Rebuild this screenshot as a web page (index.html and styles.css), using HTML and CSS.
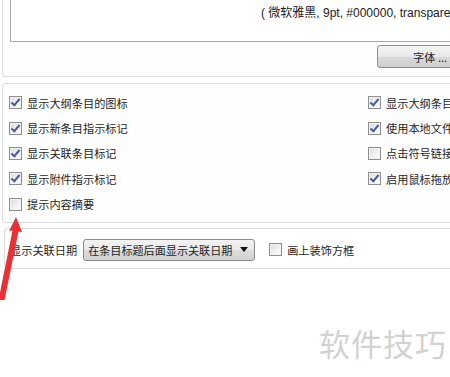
FILE: index.html
```html
<!DOCTYPE html>
<html lang="zh-CN">
<head>
<meta charset="utf-8">
<link rel="stylesheet" href="styles.css">
</head>
<body>
<div class="page">
  <section class="panel panel-font">
    <div class="preview">
      <div class="preview-text">
        <div class="cut-line">字体：微软雅黑</div>
        <div class="font-desc">( 微软雅黑, 9pt, #000000, transparent )</div>
      </div>
    </div>
    <div class="btn-row"><button class="btn">字体 ...</button></div>
  </section>

  <section class="panel panel-options">
    <label class="opt"><span class="cb on"></span>显示大纲条目的图标</label>
    <label class="opt"><span class="cb on"></span>显示大纲条目的大小</label>
    <label class="opt"><span class="cb on"></span>显示新条目指示标记</label>
    <label class="opt"><span class="cb on"></span>使用本地文件图标</label>
    <label class="opt"><span class="cb on"></span>显示关联条目标记</label>
    <label class="opt"><span class="cb"></span>点击符号链接打开</label>
    <label class="opt"><span class="cb on"></span>显示附件指示标记</label>
    <label class="opt"><span class="cb on"></span>启用鼠标拖放操作</label>
    <label class="opt"><span class="cb"></span>提示内容摘要</label>
  </section>

  <section class="panel panel-date">
    <span class="date-label">显示关联日期</span>
    <div class="select"><span>在条目标题后面显示关联日期</span><span class="caret"></span></div>
    <label class="opt inline"><span class="cb"></span>画上装饰方框</label>
  </section>

  <svg class="arrow" width="30" height="100" viewBox="0 0 30 100">
    <polygon points="16,0 22,15 18.5,14.5 4.5,83 -1.5,83 12.5,13.5 9,14" fill="#ea2f35"/>
  </svg>

  <div class="watermark">软件技巧</div>
</div>
</body>
</html>
```

FILE: styles.css
```css
html, body {
  margin: 0;
  padding: 0;
  background: #ffffff;
}
body {
  width: 450px;
  height: 377px;
  overflow: hidden;
  font-family: "Noto Sans CJK SC", "Noto Sans", sans-serif;
  font-size: 11.2px;
  color: #1e1e1e;
}
.page {
  position: relative;
  width: 450px;
  height: 377px;
  overflow: hidden;
}
.panel {
  box-sizing: border-box;
  border: 1px solid #dcdee0;
  border-right: none;
  background: #ffffff;
}
.panel-font {
  margin-left: 2px;
  height: 77px;
  border-top: none;
  border-bottom-left-radius: 4px;
  padding-left: 7px;
  background: #fdfdfd;
}
.preview {
  box-sizing: border-box;
  height: 42px;
  border: 1px solid #a8a8a8;
  border-top: none;
  border-right: none;
  background: #ffffff;
  overflow: hidden;
}
.preview-text {
  margin-left: 250px;
  margin-top: -14px;
  font-family: "Liberation Sans", "Noto Sans CJK SC", sans-serif;
  font-size: 12px;
  line-height: 18px;
  white-space: nowrap;
  color: #222;
}
.cut-line { padding-left: 60px; }
.btn-row {
  margin-top: 3px;
  padding-left: 367px;
}
.btn {
  box-sizing: border-box;
  width: 90px;
  height: 23px;
  border: 1px solid #8e8e8e;
  border-radius: 3px;
  background: linear-gradient(#f4f4f4, #e8e8e8 50%, #d9d9d9 51%, #cfcfcf);
  font-family: "Noto Sans CJK SC", sans-serif;
  font-size: 11.2px;
  color: #1e1e1e;
  text-align: left;
  padding: 0 0 0 35px;
}
.panel-options {
  margin-top: 6px;
  margin-left: 2px;
  height: 140px;
  border-radius: 4px 0 0 4px;
  padding: 6px 0 0 6px;
  display: grid;
  grid-template-columns: 359px auto;
  grid-auto-rows: 25.4px;
  background: #fefefe;
}
.opt {
  display: flex;
  align-items: center;
  gap: 5px;
  white-space: nowrap;
}
.cb {
  box-sizing: border-box;
  width: 13px;
  height: 13px;
  flex: none;
  border: 1px solid #8f8f8f;
  background: linear-gradient(135deg, #d8dbe0, #f6f6f6 70%);
  box-shadow: inset 0 0 0 1px #f2f2f2;
  position: relative;
}
.cb.on::after {
  content: "";
  position: absolute;
  left: 3px;
  top: 0px;
  width: 3px;
  height: 7px;
  border: solid #4a5c99;
  border-width: 0 2px 2px 0;
  transform: rotate(40deg);
}
.panel-date {
  margin-top: 5px;
  margin-left: 4px;
  height: 41px;
  border-radius: 4px 0 0 4px;
  display: flex;
  align-items: center;
  padding-left: 5px;
  padding-top: 2px;
}
.date-label { margin-right: 6px; }
.select {
  box-sizing: border-box;
  width: 172px;
  height: 22px;
  border: 1px solid #8b8b8b;
  border-radius: 3px;
  background: linear-gradient(#f3f3f3, #e9e9e9 50%, #dcdcdc 51%, #d2d2d2);
  display: flex;
  align-items: center;
  padding-left: 4px;
  font-size: 11.1px;
  margin-right: 14px;
}
.caret {
  margin-left: 8px;
  width: 0;
  height: 0;
  border-left: 4px solid transparent;
  border-right: 4px solid transparent;
  border-top: 5px solid #111;
}
.opt.inline { gap: 5px; }
.arrow {
  position: absolute;
  left: 0;
  top: 217px;
}
.watermark {
  position: absolute;
  left: 319px;
  top: 320px;
  font-family: "Noto Sans CJK SC", sans-serif;
  font-size: 31px;
  color: #d2d2d2;
  letter-spacing: 1px;
}
```
